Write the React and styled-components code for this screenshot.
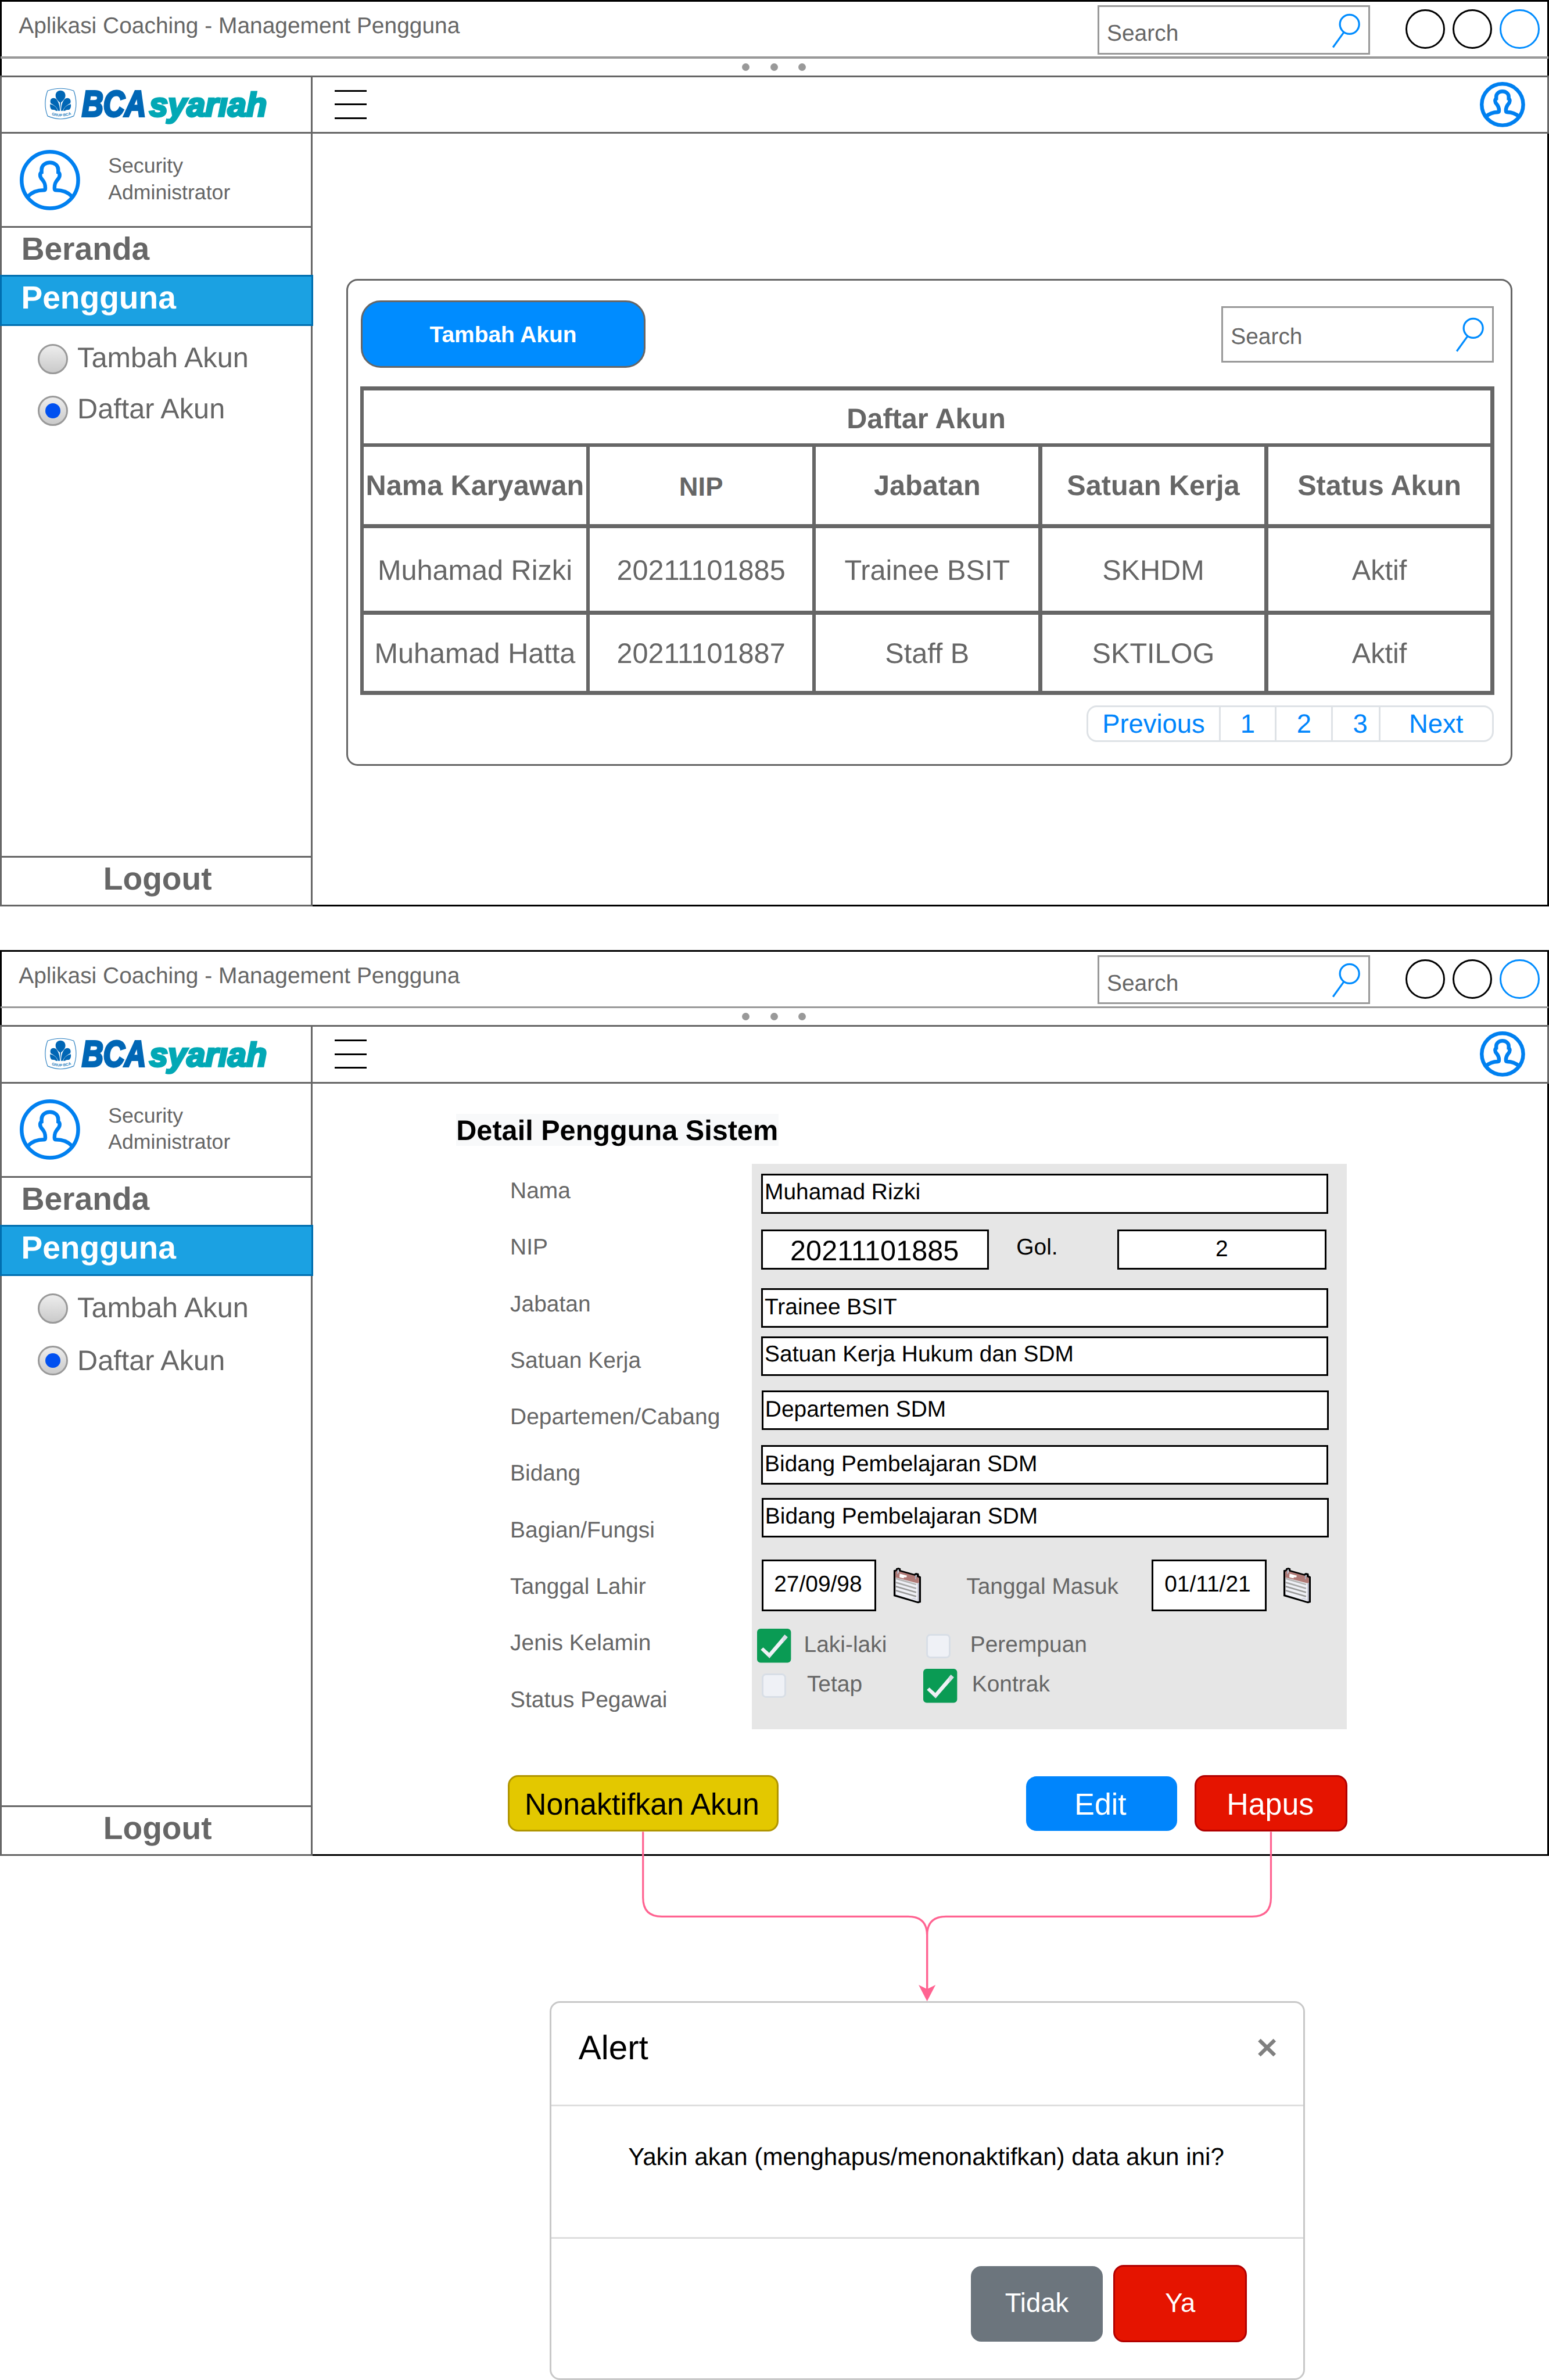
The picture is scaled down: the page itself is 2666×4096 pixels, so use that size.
import React from "react";
import styled, { createGlobalStyle, css } from "styled-components";

/* 100 design units = 1rem */
const u = (n) => `${+(n / 100).toFixed(4)}rem`;

const ink = "#666666";
const blue = "#008CFF";

const GlobalStyle = createGlobalStyle`
  html { font-size: 81.08px; }
  body {
    margin: 0;
    background: #fff;
    color: ${ink};
    font-family: "Liberation Sans", Arial, Helvetica, sans-serif;
    text-rendering: geometricPrecision;
  }
  *, *::before, *::after { box-sizing: border-box; }
  button, p, h1, h2 { margin: 0; padding: 0; font: inherit; }
  svg { display: block; flex: none; overflow: visible; }
`;

const Page = styled.div`
  position: relative;
  width: 2666px;
  height: 4096px;
  overflow: hidden;
  line-height: 1.24;
  white-space: nowrap;
`;

/* ---------- window frame ---------- */

const Frame = styled.section`
  display: flex;
  flex-direction: column;
  width: ${u(3288)};
  height: ${u(1924)};
  margin-bottom: ${(p) => u(p.$after)};
`;

const TitleBar = styled.header`
  display: flex;
  align-items: flex-start;
  flex: none;
  height: ${u(120)};
  border: ${u(4)} solid #000;
  border-bottom: 0;
  padding: 0 ${u(16.5)} 0 ${u(36)};
`;

const WindowTitle = styled.h1`
  && { margin: ${u(22.6)} auto 0 0; font-size: ${u(48)}; }
`;

const SearchBox = styled.div`
  display: flex;
  justify-content: space-between;
  align-items: flex-start;
  width: ${u(578)};
  height: ${(p) => u(p.$h)};
  margin-top: ${(p) => u(p.$top)};
  padding: 0 ${u(16.5)} 0 ${u(16)};
  border: ${u(4)} solid #999;
  font-size: ${u(48)};
  span { margin-top: ${(p) => u(p.$text)}; }
  svg { width: ${u(60)}; height: ${u(72)}; margin-top: ${(p) => u(p.$icon)}; }
`;

const Controls = styled.div`
  display: flex;
  gap: ${u(16)};
  margin: ${u(16)} 0 0 ${u(76)};
`;

const Control = styled.span`
  width: ${u(84)};
  height: ${u(84)};
  border: ${u(4)} solid ${(p) => p.$color};
  border-radius: 50%;
`;

const Rule = styled.div`
  flex: none;
  height: ${u(4)};
  background: #999;
  border: solid #000;
  border-width: 0 ${u(2)};
`;

const DotStrip = styled.div`
  display: flex;
  flex: none;
  justify-content: center;
  align-items: center;
  gap: ${u(44)};
  height: ${u(36)};
  padding-right: ${u(2)};
  border: solid #000;
  border-width: 0 ${u(4)};
`;

const Dot = styled.i`
  width: ${u(16)};
  height: ${u(16)};
  border-radius: 50%;
  background: #999;
`;

const NavBar = styled.div`
  display: flex;
  flex: none;
  height: ${u(124)};
  border: ${u(4)} solid ${ink};
`;

const LogoCell = styled.div`
  width: ${u(660)};
  padding: ${u(23)} 0 0 ${u(91)};
  border-right: ${u(4)} solid ${ink};
  svg { width: ${u(480)}; height: ${u(92)}; }
`;

const Burger = styled.div`
  display: flex;
  flex-direction: column;
  gap: ${u(25)};
  width: ${u(68)};
  margin: ${u(27)} auto 0 ${u(46.5)};
  i { height: ${u(4)}; background: #000; }
`;

const NavAvatar = styled.div`
  margin: ${u(10)} ${u(46.5)} 0 0;
  svg { width: ${u(96)}; height: ${u(96)}; }
`;

const Body = styled.div`
  display: flex;
  height: ${u(1640)};
`;

/* ---------- sidebar ---------- */

const Sidebar = styled.aside`
  display: flex;
  flex-direction: column;
  flex: none;
  width: ${u(664)};
  border: solid ${ink};
  border-width: 0 ${u(4)} ${u(4)};
`;

const Profile = styled.div`
  display: flex;
  gap: ${u(60)};
  flex: none;
  height: ${u(200)};
  padding: ${u(34)} 0 0 ${u(38)};
  border-bottom: ${u(4)} solid ${ink};
  svg { width: ${u(128)}; height: ${u(128)}; }
`;

const Role = styled.p`
  && { margin-top: ${u(7)}; font-size: ${u(44)}; line-height: ${u(56)}; }
`;

const MenuItem = styled.div`
  flex: none;
  height: ${u(100)};
  padding: ${u(2.3)} 0 0 ${u(41.5)};
  font-size: ${u(68)};
  font-weight: 700;
  ${(p) =>
    p.$active &&
    css`
      height: ${u(108)};
      margin: 0 ${u(-4)};
      color: #fff;
      background: #1ba1e2;
      border: ${u(4)} solid #006eaf;
    `}
`;

const RadioList = styled.div`
  display: flex;
  flex-direction: column;
  gap: ${u(46)};
  padding: ${u(38)} 0 0 ${u(76)};
`;

const RadioRow = styled.div`
  display: flex;
  align-items: flex-start;
  gap: ${u(20.5)};
  height: ${u(64)};
  font-size: ${u(60)};
  span { margin-top: ${(p) => u(p.$lift)}; }
`;

const Radio = styled.i`
  display: grid;
  place-items: center;
  flex: none;
  width: ${u(64)};
  height: ${u(64)};
  border: ${u(4)} solid #999;
  border-radius: 50%;
  background: linear-gradient(#ededed, #cacaca);
  &::after {
    content: "";
    width: ${u(32)};
    height: ${u(32)};
    border-radius: 50%;
    background: ${(p) => (p.$on ? "#0050F0" : "transparent")};
  }
`;

const Logout = styled.div`
  margin-top: auto;
  height: ${u(104)};
  padding: ${u(2.6)} 0 0 ${u(5)};
  border-top: ${u(4)} solid ${ink};
  font-size: ${u(68)};
  font-weight: 700;
  text-align: center;
`;

const Main = styled.main`
  flex: 1;
  border: solid #000;
  border-width: 0 ${u(4)} ${u(4)} 0;
`;

/* ---------- account list ---------- */

const Card = styled.div`
  width: ${u(2476)};
  height: ${u(1034)};
  margin: ${u(308)} 0 0 ${u(70.5)};
  padding: ${u(42)} ${u(34)} 0 ${u(26)};
  border: ${u(4)} solid ${ink};
  border-radius: ${u(24)};
`;

const Toolbar = styled.div`
  display: flex;
  justify-content: space-between;
  align-items: flex-start;
  height: ${u(142.5)};
  padding: 0 ${u(2)};
`;

const AddButton = styled.button`
  width: ${u(604)};
  height: ${u(142.5)};
  border: ${u(4)} solid ${ink};
  border-radius: ${u(42)};
  background: ${blue};
  color: #fff;
  && { padding-top: ${u(4)}; font-size: ${u(48)}; font-weight: 700; }
`;

const Table = styled.div`
  display: grid;
  grid-template-columns: repeat(5, ${u(472)});
  grid-template-rows: ${u(112.2)} ${u(164)} ${u(176)} ${u(162)};
  gap: ${u(8)};
  width: ${u(2408)};
  margin-top: ${u(40.2)};
  padding: ${u(8)};
  background: ${ink};
`;

const Cell = styled.div`
  background: #fff;
  padding-top: ${(p) => u(p.$top)};
  text-align: center;
  font-size: ${(p) => u(p.$size || 60)};
  font-weight: ${(p) => (p.$bold ? 700 : 400)};
  ${(p) =>
    p.$wide &&
    css`
      grid-column: 1 / -1;
      padding-right: ${u(4)};
    `}
`;

const Pager = styled.nav`
  display: flex;
  width: ${u(864)};
  height: ${u(78.5)};
  margin: ${u(22.5)} ${u(2)} 0 auto;
  border: ${u(4)} solid #dee2e6;
  border-radius: ${u(22)};
  color: #0085fc;
  font-size: ${u(56)};
`;

const PageLink = styled.span`
  width: ${(p) => u(p.$w)};
  padding-top: ${u(1.6)};
  padding-left: ${(p) => u(p.$indent || 0)};
  text-align: center;
  & + & { border-left: ${u(4)} solid #dee2e6; }
`;

/* ---------- user detail ---------- */

const DetailTitle = styled.h2`
  && {
    margin: ${u(64)} 0 0 ${u(304.5)};
    font-size: ${u(60)};
    font-weight: 700;
    line-height: ${u(72)};
  }
  width: ${u(684)};
  height: ${u(68)};
  background: #f8f9fa;
  color: #000;
`;

const Form = styled.div`
  display: flex;
  height: ${u(1200)};
  margin: ${u(38)} 0 0 ${u(419)};
`;

const Labels = styled.div`
  display: grid;
  grid-auto-rows: ${u(120)};
  align-content: start;
  width: ${u(512.5)};
  padding-top: ${u(28.9)};
  font-size: ${u(48)};
`;

const Panel = styled.div`
  width: ${u(1264)};
  padding: ${u(22)} 0 0 ${u(20)};
  background: #e6e6e6;
  font-size: ${u(48)};
`;

const Line = styled.div`
  display: flex;
  align-items: flex-start;
  margin-top: ${(p) => u(p.$gap || 0)};
  margin-left: ${(p) => u(p.$x || 0)};
`;

const Field = styled.div`
  flex: none;
  width: ${(p) => u(p.$w || 1204)};
  height: ${(p) => u(p.$h || 84)};
  padding: ${(p) => u(p.$top)} ${(p) => u(p.$right || 0)} 0 ${(p) => (p.$center ? 0 : u(4))};
  border: ${u(4)} solid #000;
  background: #fff;
  color: #000;
  font-size: ${(p) => u(p.$size || 48)};
  text-align: ${(p) => (p.$center ? "center" : "left")};
`;

const Caption = styled.span`
  width: ${(p) => u(p.$w)};
  margin: ${(p) => u(p.$top)} 0 0 ${(p) => u(p.$left)};
  color: ${(p) => p.$color || ink};
`;

const CalendarSlot = styled.div`
  margin: ${u(17.3)} 0 0 ${u(36)};
  svg { width: ${u(58)}; height: ${u(75.7)}; }
`;

const Choice = styled.label`
  display: flex;
  align-items: flex-start;
  flex: none;
  gap: ${(p) => u(p.$gap)};
  width: ${(p) => u(p.$w)};
  height: ${u(72)};
  span { margin-top: ${u(4.4)}; }
  svg { width: ${u(72)}; height: ${u(72)}; }
`;

const EmptyCheck = styled.i`
  flex: none;
  width: ${u(52)};
  height: ${u(52)};
  margin-top: ${u(10)};
  border: ${u(4)} solid #d8dee6;
  border-radius: ${u(9)};
  background: #eff1f6;
`;

const Actions = styled.div`
  display: flex;
  align-items: center;
  margin: ${u(98)} 0 0 ${u(414)};
`;

const tones = {
  yellow: ["#E3C800", "#B09500", "#000"],
  blue: ["#0085FC", "#0085FC", "#fff"],
  red: ["#E51400", "#B20000", "#fff"],
  gray: ["#6C757D", "#6C757D", "#fff"],
};

const Button = styled.button`
  display: flex;
  justify-content: center;
  align-items: flex-start;
  width: ${(p) => u(p.$w)};
  height: ${(p) => u(p.$h)};
  border: ${u(4)} solid ${(p) => tones[p.$tone][1]};
  border-radius: ${u(22)};
  background: ${(p) => tones[p.$tone][0]};
  color: ${(p) => tones[p.$tone][2]};
  && {
    font-size: ${(p) => u(p.$size)};
    line-height: 1.22;
    padding: ${(p) => u(p.$top)} ${(p) => u(p.$right || 0)} 0 0;
    margin-left: ${(p) => u(p.$left || 0)};
  }
`;

/* ---------- alert ---------- */

const Alert = styled.section`
  width: ${u(1604)};
  height: ${u(804)};
  margin-left: ${u(1166.5)};
  border: ${u(4)} solid #c8c8c8;
  border-radius: ${u(22)};
  color: #000;
`;

const AlertHead = styled.div`
  display: flex;
  justify-content: space-between;
  align-items: flex-start;
  height: ${u(219.8)};
  padding: 0 ${u(58)};
  border-bottom: ${u(4)} solid #dedede;
  font-size: ${u(72)};
  span { margin-top: ${u(51.8)}; }
  svg { width: ${u(38.6)}; height: ${u(37)}; margin-top: ${u(75.7)}; }
`;

const AlertText = styled.p`
  height: ${u(280.4)};
  && { padding: ${u(74.6)} ${u(5)} 0 0; font-size: ${u(52)}; }
  border-bottom: ${u(4)} solid #dedede;
  text-align: center;
`;

const AlertActions = styled.div`
  display: flex;
  justify-content: flex-end;
  align-items: center;
  padding: ${u(56)} ${u(119.5)} 0 0;
`;

const Connectors = styled.svg`
  position: absolute;
  left: ${u(1300)};
  top: ${u(3880)};
  width: ${u(1500)};
  height: ${u(370)};
`;

/* ---------- drawings ---------- */

const Magnifier = () => (
  <svg viewBox="0 0 60 72" fill="none" stroke={blue} strokeWidth="4">
    <circle cx="36.6" cy="22" r="20.4" />
    <path d="M24.5 39 L1.5 71" />
  </svg>
);

const Avatar = ({ stroke = 8 }) => (
  <svg viewBox="0 0 128 128" fill="none" stroke="#0080F0" strokeWidth={stroke}>
    <circle cx="64" cy="64" r={64 - stroke / 2} />
    <path d="M18 98 C27 89 39 85.5 51 85.5 Q54.2 85.5 54.2 81 C54.2 73 53 69.5 48.5 64 C45 60 43.3 58.5 43.3 53.5 C43.3 50 44 48.5 46.3 47.5 L46.3 42 C46.3 33 54 26.7 64 26.7 C74 26.7 81.7 33 81.7 42 L81.7 47.5 C84 48.5 84.7 50 84.7 53.5 C84.7 58.5 83 60 79.5 64 C75 69.5 73.8 73 73.8 81 Q73.8 85.5 77 85.5 C89 85.5 101 89 110 98" />
  </svg>
);

const Logo = ({ id }) => (
  <svg viewBox="95 187 480 92">
    <path
      d="M101 193.5 Q128.7 183.5 156.5 193.5 Q166.5 221 156.5 247 Q128.7 259.5 101 247 Q91 221 101 193.5Z"
      fill="#fff"
      stroke="#2a7fc1"
      strokeWidth="1.4"
    />
    <g fill="#0066B5">
      <path d="M128.4 193 C135 193 138.8 198 138.8 203.5 C138.8 209 135 213.5 129.5 218 L128.4 236 L127 218 C121.5 213.5 118 209 118 203.5 C118 198 122 193 128.4 193Z" />
      <path d="M106.8 216 C106.8 210 112 207.5 117 209.5 C121 211.5 126.5 219 127.3 236 L123.5 236 C121 228 114 223.5 107.5 220Z" />
      <path d="M150 216 C150 210 144.5 207.5 139.8 209.5 C135.5 211.5 130.3 219 129.5 236 L133.3 236 C136 228 143 223.5 149.3 220Z" />
      <path d="M106.5 222 C113 223.5 120 227 122.5 236 L118.5 236 C117 233 113 234.5 110 233.5 C107 232 105.5 226 106.5 222Z" />
      <path d="M150.3 222 C144 223.5 136.8 227 134.3 236 L138.3 236 C140 233 144 234.5 147 233.5 C150 232 151.3 226 150.3 222Z" />
    </g>
    <path id={id} d="M109.5 244.5 Q129 251.5 149 244.5" fill="none" />
    <g fontFamily='"Liberation Sans", Arial, sans-serif' fontWeight="700">
      <text fill="#2a7fc1" fontSize="8">
        <textPath href={`#${id}`}>GRUP BCA</textPath>
      </text>
      <g fontStyle="italic">
        <text transform="translate(174 248) scale(0.815 1)" fontSize="77" fill="#0066B5" stroke="#0066B5" strokeWidth="5">BCA</text>
        <text transform="translate(317 247.5) scale(1.003 1)" fontSize="71" fill="#02A8B5" stroke="#02A8B5" strokeWidth="4.5">syarıah</text>
      </g>
    </g>
  </svg>
);

const Calendar = () => (
  <svg viewBox="918 85 174 227">
    <path d="M918 101 L933 97 L933 90 L948 85 L963 90 L963 101 L1048 125 L1060 118 L1078 122 L1080 136 L1092 142 L1092 306 L1074 312 L918 266Z" fill="#000" />
    <path d="M930 111 L1080 152 L1080 298 L1070 300 L930 257Z" fill="#EFF0F6" />
    <path d="M930 110 L940 104 L1052 136 L1080 150 L1080 181 L1070 184 L930 147Z" fill="#B07A76" />
    <path d="M1072 184 L1080 181 L1080 298 L1072 300Z" fill="#A9A9BC" />
    <path d="M957 123 L1003 136 L1000 146 L984 146 L982 153 L955 146Z" fill="#fff" />
    <g strokeWidth="10" fill="none">
      <path d="M932 154 L1062 192" stroke="#B5B5B5" />
      <path d="M932 179 L1062 217" stroke="#A8A8A8" />
      <path d="M932 204 L1062 242" stroke="#999" />
      <path d="M932 230 L1062 268" stroke="#999" />
    </g>
    <path d="M1030 284 L1050 275 L1070 290Z" fill="#D4D5E2" />
    <g strokeWidth="7" fill="none" stroke="#A9B0C2">
      <path d="M944 98 L944 125" />
      <path d="M1058 132 L1058 159" />
    </g>
    <path d="M950 96 L950 116 M1064 131 L1064 142" stroke="#EFF0F6" strokeWidth="4" />
  </svg>
);

const Checked = () => (
  <svg viewBox="0 0 216 216">
    <rect width="216" height="216" rx="22" fill="#0A9B54" />
    <path d="M23 134 L39 119 L77 154 L176 38 L195 55 L79 188Z" fill="#EFF1F6" />
    <path d="M163 53 L176 38 L195 55 L163 92Z M67 175 L90 175 L79 188Z" fill="#D8DEE6" />
  </svg>
);

const Cross = () => (
  <svg viewBox="0 0 38.6 37" stroke="#808080" strokeWidth="8">
    <path d="M3 2.5 L35.6 34.5 M35.6 2.5 L3 34.5" />
  </svg>
);

/* ---------- composition ---------- */

const Search = ({ large }) => (
  <SearchBox $h={large ? 120 : 104} $top={large ? 11.8 : 8} $text={large ? 33 : 26.6} $icon={large ? 21 : 14}>
    <span>Search</span>
    <Magnifier />
  </SearchBox>
);

const AppWindow = ({ name, after, lastLift, children }) => (
  <Frame $after={after}>
    <TitleBar>
      <WindowTitle>Aplikasi Coaching - Management Pengguna</WindowTitle>
      <Search />
      <Controls>
        <Control $color="#000" />
        <Control $color="#000" />
        <Control $color={blue} />
      </Controls>
    </TitleBar>
    <Rule />
    <DotStrip>
      <Dot />
      <Dot />
      <Dot />
    </DotStrip>
    <NavBar>
      <LogoCell>
        <Logo id={`badge-${name}`} />
      </LogoCell>
      <Burger>
        <i />
        <i />
        <i />
      </Burger>
      <NavAvatar>
        <Avatar stroke={10.6} />
      </NavAvatar>
    </NavBar>
    <Body>
      <Sidebar>
        <Profile>
          <Avatar />
          <Role>
            Security
            <br />
            Administrator
          </Role>
        </Profile>
        <MenuItem>Beranda</MenuItem>
        <MenuItem $active>Pengguna</MenuItem>
        <RadioList>
          <RadioRow $lift={-6.8}>
            <Radio />
            <span>Tambah Akun</span>
          </RadioRow>
          <RadioRow $lift={lastLift}>
            <Radio $on />
            <span>Daftar Akun</span>
          </RadioRow>
        </RadioList>
        <Logout>Logout</Logout>
      </Sidebar>
      <Main>{children}</Main>
    </Body>
  </Frame>
);

const headers = ["Nama Karyawan", "NIP", "Jabatan", "Satuan Kerja", "Status Akun"];
const rows = [
  ["Muhamad Rizki", "20211101885", "Trainee BSIT", "SKHDM", "Aktif"],
  ["Muhamad Hatta", "20211101887", "Staff B", "SKTILOG", "Aktif"],
];
const rowPad = [54.2, 45.8];

const AccountList = () => (
  <Card>
    <Toolbar>
      <AddButton>Tambah Akun</AddButton>
      <Search large />
    </Toolbar>
    <Table>
      <Cell $wide $bold $top={23.4}>
        Daftar Akun
      </Cell>
      {headers.map((h) => (
        <Cell key={h} $bold $top={h === "NIP" ? 50 : 45.7} $size={h === "NIP" ? 56 : 60}>
          {h}
        </Cell>
      ))}
      {rows.map((row, r) =>
        row.map((value, c) => (
          <Cell key={`${r}-${c}`} $top={rowPad[r]}>
            {value}
          </Cell>
        ))
      )}
    </Table>
    <Pager>
      <PageLink $w={276.5}>Previous</PageLink>
      <PageLink $w={119.5}>1</PageLink>
      <PageLink $w={119.7}>2</PageLink>
      <PageLink $w={100.7} $indent={18}>
        3
      </PageLink>
      <PageLink $w={239.6}>Next</PageLink>
    </Pager>
  </Card>
);

const labels = [
  "Nama",
  "NIP",
  "Jabatan",
  "Satuan Kerja",
  "Departemen/Cabang",
  "Bidang",
  "Bagian/Fungsi",
  "Tanggal Lahir",
  "Jenis Kelamin",
  "Status Pegawai",
];

const units = [
  { text: "Trainee BSIT", gap: 39.6, top: 7.6 },
  { text: "Satuan Kerja Hukum dan SDM", gap: 19, top: 5.2 },
  { text: "Departemen SDM", gap: 31, top: 6.8, x: 1 },
  { text: "Bidang Pembelajaran SDM", gap: 32, top: 6.5 },
  { text: "Bidang Pembelajaran SDM", gap: 28, top: 6.2, x: 1 },
];

const UserDetail = () => (
  <>
    <DetailTitle>Detail Pengguna Sistem</DetailTitle>
    <Form>
      <Labels>
        {labels.map((l) => (
          <span key={l}>{l}</span>
        ))}
      </Labels>
      <Panel>
        <Line>
          <Field $top={5.5}>Muhamad Rizki</Field>
        </Line>
        <Line $gap={34.4}>
          <Field $w={484} $top={4.3} $size={60} $center $right={2}>
            20211101885
          </Field>
          <Caption $w={214} $top={7.6} $left={58} $color="#000">
            Gol.
          </Caption>
          <Field $w={444} $top={8.4} $center>
            2
          </Field>
        </Line>
        {units.map((f, i) => (
          <Line key={i} $gap={f.gap} $x={f.x}>
            <Field $top={f.top}>{f.text}</Field>
          </Line>
        ))}
        <Line $gap={47} $x={1}>
          <Field $w={244} $h={110} $top={19.4} $center $right={4}>
            27/09/98
          </Field>
          <CalendarSlot>
            <Calendar />
          </CalendarSlot>
          <Caption $w={393} $top={27.8} $left={97}>
            Tanggal Masuk
          </Caption>
          <Field $w={244} $h={110} $top={19.4} $center $right={6}>
            01/11/21
          </Field>
          <CalendarSlot>
            <Calendar />
          </CalendarSlot>
        </Line>
        <Line $gap={37} $x={-9}>
          <Choice $w={359} $gap={28}>
            <Checked />
            <span>Laki-laki</span>
          </Choice>
          <Choice $w={400} $gap={42}>
            <EmptyCheck />
            <span>Perempuan</span>
          </Choice>
        </Line>
        <Line $gap={12} $x={1}>
          <Choice $w={343} $gap={44.6}>
            <EmptyCheck />
            <span>Tetap</span>
          </Choice>
          <Choice $w={400} $gap={31.7}>
            <Checked />
            <span>Kontrak</span>
          </Choice>
        </Line>
      </Panel>
    </Form>
    <Actions>
      <Button $tone="yellow" $w={574.5} $h={120} $size={64} $top={19.4} $right={5}>
        Nonaktifkan Akun
      </Button>
      <Button $tone="blue" $w={320} $h={116} $left={526} $size={64} $top={17.4} $right={5}>
        Edit
      </Button>
      <Button $tone="red" $w={324} $h={120} $left={37.5} $size={64} $top={19.4} $right={3}>
        Hapus
      </Button>
    </Actions>
  </>
);

export default function App() {
  return (
    <>
      <GlobalStyle />
      <Page>
        <AppWindow name="list" after={92} lastLift={-8.8}>
          <AccountList />
        </AppWindow>
        <AppWindow name="detail" after={308} lastLift={-4.8}>
          <UserDetail />
        </AppWindow>
        <Alert>
          <AlertHead>
            <span>Alert</span>
            <Cross />
          </AlertHead>
          <AlertText>Yakin akan (menghapus/menonaktifkan) data akun ini?</AlertText>
          <AlertActions>
            <Button $tone="gray" $w={280} $h={160} $size={56} $top={41}>
              Tidak
            </Button>
            <Button $tone="red" $w={284} $h={164} $left={22.5} $size={56} $top={43}>
              Ya
            </Button>
          </AlertActions>
        </Alert>
        <Connectors viewBox="1300 3880 1500 370" fill="none" stroke="#FF6391" strokeWidth="4">
          <path d="M1365 3888 V4028 Q1365 4068 1405 4068 H1928 Q1968 4068 1968 4108 V4224" />
          <path d="M2698 3888 V4028 Q2698 4068 2658 4068 H2008 Q1968 4068 1968 4108 V4224" />
          <path d="M1968 4248 L1950 4213 L1968 4222 L1986 4213Z" fill="#FF6391" stroke="none" />
        </Connectors>
      </Page>
    </>
  );
}
